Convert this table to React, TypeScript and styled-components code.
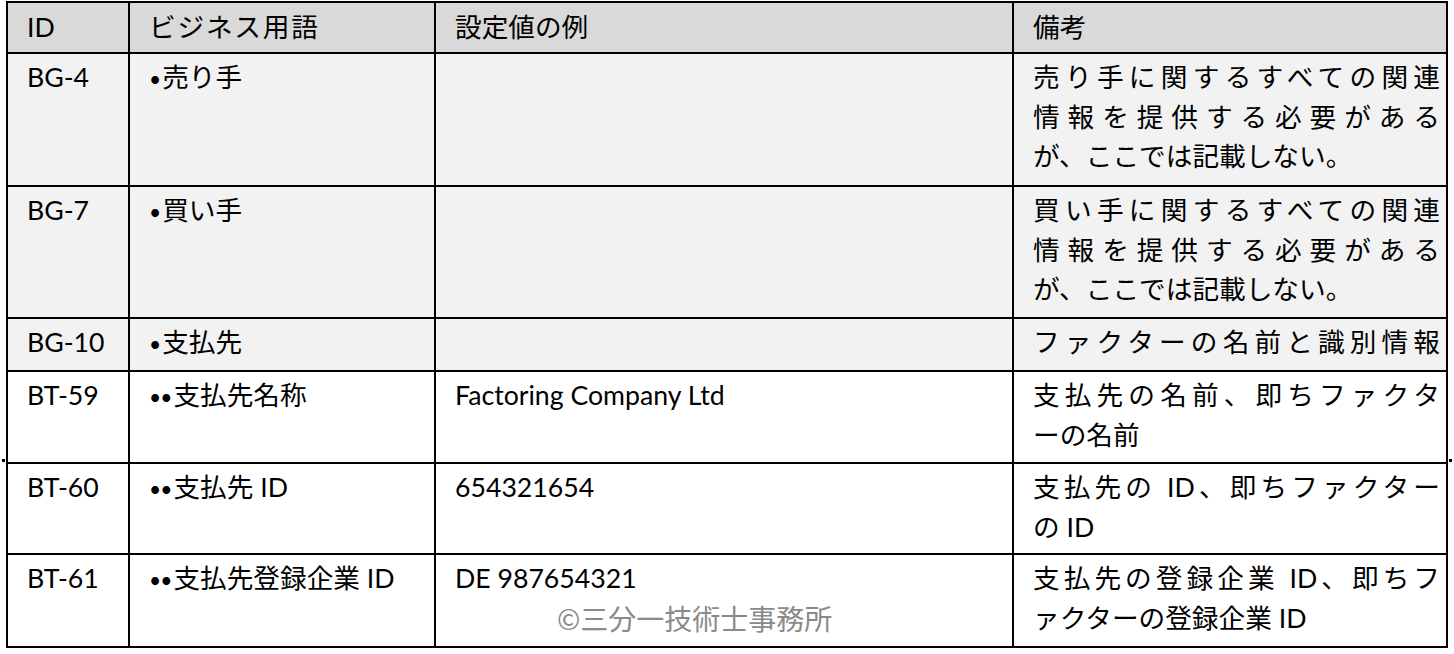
import { FC } from "react";
import styled, { createGlobalStyle } from "styled-components";

const GlobalStyle = createGlobalStyle`
  html, body {
    margin: 0;
    padding: 0;
    background: #ffffff;
  }
  body {
    font-family: Lato, "Noto Sans CJK JP", sans-serif;
    color: #000000;
  }
`;

const COLUMNS = "122px 306px 578px 434px";

type Tone = "head" | "group" | "term";

const toneColor: Record<Tone, string> = {
  head: "#d9d9d9",
  group: "#f2f2f2",
  term: "#ffffff",
};

const SPage = styled.div`
  position: relative;
  width: 1454px;
  height: 654px;
  padding: 1px 0 0 6px;
  box-sizing: border-box;

  /* stray marks left and right of the BT-59 row edge */
  &::before,
  &::after {
    content: "";
    position: absolute;
    top: 459px;
    width: 3px;
    height: 3px;
    background: #000;
  }
  &::before {
    left: 2px;
  }
  &::after {
    left: 1449px;
  }
`;

const STable = styled.div`
  width: 1442px;
  display: flex;
  flex-direction: column;
  border-top: 2px solid #000;
  border-left: 2px solid #000;
  box-sizing: border-box;
`;

const SRow = styled.div<{ $height: number; $tone: Tone }>`
  display: grid;
  grid-template-columns: ${COLUMNS};
  height: ${(p) => p.$height}px;
  background: ${(p) => toneColor[p.$tone]};
`;

const SCell = styled.div<{ $head?: boolean }>`
  border-right: 2px solid #000;
  border-bottom: 2px solid #000;
  padding: ${(p) => (p.$head ? "5px" : "4px")} 6px 0 19px;
  font-size: 26.67px;
  line-height: 39.5px;
  overflow: hidden;
`;

const SLine = styled.div<{ $spread?: boolean; $gap?: number }>`
  text-align: ${(p) => (p.$spread ? "justify" : "left")};
  text-align-last: ${(p) => (p.$spread ? "justify" : "auto")};
  letter-spacing: ${(p) => p.$gap ?? 0}px;
  white-space: ${(p) => (p.$spread ? "normal" : "nowrap")};
`;

const SBullets = styled.span`
  font-size: 21px;
  letter-spacing: -1px;
  margin-right: 2px;
`;

const SWatermark = styled.div`
  margin-left: 102px;
  font-family: "Noto Sans CJK JP", sans-serif;
  font-size: 28px;
  line-height: 39.5px;
  color: #8a8a8a;
  white-space: nowrap;
`;

interface Line {
  text: string;
  spread?: boolean;
}

interface Entry {
  id: string;
  level: number;
  term: string;
  example?: string;
  remarks: Line[];
  height: number;
  tone: Tone;
  watermark?: boolean;
}

const NOTE_LINES = (head: string): Line[] => [
  { text: `${head}に関するすべての関連`, spread: true },
  { text: "情報を提供する必要がある", spread: true },
  { text: "が、ここでは記載しない。" },
];

const entries: Entry[] = [
  { id: "BG-4", level: 1, term: "売り手", remarks: NOTE_LINES("売り手"), height: 133, tone: "group" },
  { id: "BG-7", level: 1, term: "買い手", remarks: NOTE_LINES("買い手"), height: 132, tone: "group" },
  {
    id: "BG-10",
    level: 1,
    term: "支払先",
    remarks: [{ text: "ファクターの名前と識別情報", spread: true }],
    height: 53,
    tone: "group",
  },
  {
    id: "BT-59",
    level: 2,
    term: "支払先名称",
    example: "Factoring Company Ltd",
    remarks: [{ text: "支払先の名前、即ちファクタ", spread: true }, { text: "ーの名前" }],
    height: 92,
    tone: "term",
  },
  {
    id: "BT-60",
    level: 2,
    term: "支払先 ID",
    example: "654321654",
    remarks: [{ text: "支払先の ID、即ちファクター", spread: true }, { text: "の ID" }],
    height: 91,
    tone: "term",
  },
  {
    id: "BT-61",
    level: 2,
    term: "支払先登録企業 ID",
    example: "DE 987654321",
    remarks: [{ text: "支払先の登録企業 ID、即ちフ", spread: true }, { text: "ァクターの登録企業 ID" }],
    height: 93,
    tone: "term",
    watermark: true,
  },
];

const TermRow: FC<{ entry: Entry }> = ({ entry }) => (
  <SRow $height={entry.height} $tone={entry.tone}>
    <SCell>{entry.id}</SCell>
    <SCell>
      <SLine>
        <SBullets>{"•".repeat(entry.level)}</SBullets>
        {entry.term}
      </SLine>
    </SCell>
    <SCell>
      {entry.example && <SLine>{entry.example}</SLine>}
      {entry.watermark && <SWatermark>©三分一技術士事務所</SWatermark>}
    </SCell>
    <SCell>
      {entry.remarks.map((line) => (
        <SLine key={line.text} $spread={line.spread}>
          {line.text}
        </SLine>
      ))}
    </SCell>
  </SRow>
);

export default function App() {
  return (
    <>
      <GlobalStyle />
      <SPage>
        <STable>
          <SRow $height={51} $tone="head">
            <SCell $head>ID</SCell>
            <SCell $head>
              <SLine $gap={1.8}>ビジネス用語</SLine>
            </SCell>
            <SCell $head>設定値の例</SCell>
            <SCell $head>備考</SCell>
          </SRow>
          {entries.map((entry) => (
            <TermRow key={entry.id} entry={entry} />
          ))}
        </STable>
      </SPage>
    </>
  );
}
